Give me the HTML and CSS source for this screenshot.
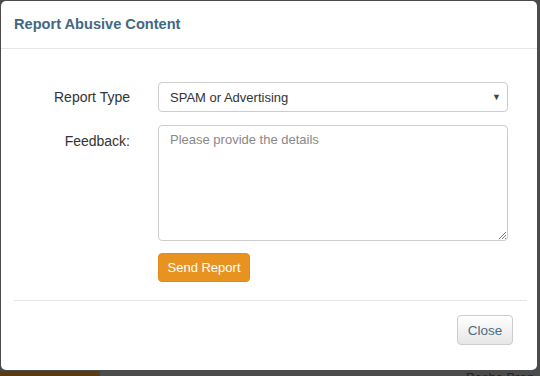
FILE: index.html
```html
<!DOCTYPE html>
<html>
<head>
<meta charset="utf-8">
<link rel="stylesheet" href="styles.css">
</head>
<body>
<div class="stage">
  <div class="modal">
    <div class="modal-header">
      <h4 class="modal-title">Report Abusive Content</h4>
    </div>
    <div class="modal-body">
      <div class="form-row type-row">
        <label class="form-label">Report Type</label>
        <div class="select">
          <span>SPAM or Advertising</span>
          <span class="caret">&#9660;</span>
        </div>
      </div>
      <div class="form-row feedback-row">
        <label class="form-label">Feedback:</label>
        <div class="textarea">
          <span class="placeholder">Please provide the details</span>
          <svg class="grip" width="8" height="8" viewBox="0 0 8 8"><path d="M8 1 L1 8 M8 4 L4 8 M8 7 L7 8" stroke="#777" stroke-width="1" fill="none"/></svg>
        </div>
      </div>
      <div class="form-row">
        <span class="form-label"></span>
        <button class="btn-send">Send Report</button>
      </div>
    </div>
    <div class="modal-footer">
      <button class="btn-close">Close</button>
    </div>
  </div>
  <div class="backdrop-strip">
    <div class="strip-brown"></div>
    <div class="strip-gray"></div>
    <div class="strip-text">Pasha Bran</div>
  </div>
</div>
</body>
</html>
```
FILE: styles.css
```css
html, body {
  margin: 0;
  padding: 0;
  background: #4b4b4b;
  font-family: "Liberation Sans", Arial, sans-serif;
  font-size: 14px;
  color: #333;
  overflow: hidden;
}
.stage {
  width: 540px;
  height: 376px;
  display: flex;
  flex-direction: column;
  padding-top: 1px;
  box-sizing: border-box;
}
.modal {
  margin-left: 1px;
  width: 536px;
  height: 369px;
  background: #fff;
  border-radius: 5px;
  display: flex;
  flex-direction: column;
  box-sizing: border-box;
  flex: none;
}
.modal-header {
  height: 48px;
  border-bottom: 1px solid #e5e5e5;
  display: flex;
  align-items: center;
  padding: 0 13px;
  box-sizing: border-box;
}
.modal-title {
  margin: 0;
  font-size: 14.6px;
  font-weight: bold;
  color: #436780;
  position: relative;
  top: -1px;
}
.modal-body {
  padding: 33px 29px 0 0;
  height: 251px;
  box-sizing: border-box;
}
.form-row {
  display: flex;
  align-items: flex-start;
  margin-bottom: 13px;
}
.form-label {
  width: 129px;
  margin-right: 28px;
  text-align: right;
  color: #333;
  flex: none;
  line-height: 30px;
  font-size: 14px;
}
.feedback-row .form-label {
  line-height: 33px;
}
.select {
  flex: 1;
  height: 30px;
  border: 1px solid #ccc;
  border-radius: 4px;
  box-sizing: border-box;
  display: flex;
  align-items: center;
  justify-content: space-between;
  padding: 0 6px 0 11px;
  color: #333;
  font-size: 13px;
}
.caret {
  font-size: 9px;
  color: #444;
}
.textarea {
  flex: 1;
  height: 116px;
  border: 1px solid #ccc;
  border-radius: 4px;
  box-sizing: border-box;
  padding: 6px 11px;
  position: relative;
  font-size: 13px;
}
.placeholder {
  color: #888;
}
.grip {
  position: absolute;
  right: 1px;
  bottom: 1px;
}
.btn-send {
  margin-top: -1px;
  height: 29px;
  width: 92px;
  background: #e8931f;
  border: 1px solid #e08a18;
  border-radius: 4px;
  color: #fff;
  font-family: "Liberation Sans", Arial, sans-serif;
  font-size: 13px;
  padding: 0;
}
.modal-footer {
  margin: 0 10px 0 13px;
  border-top: 1px solid #e5e5e5;
  padding-top: 14px;
  display: flex;
  justify-content: flex-end;
}
.btn-close {
  margin-right: 14px;
  width: 56px;
  height: 30px;
  border: 1px solid #ccc;
  border-radius: 4px;
  background: linear-gradient(#ffffff, #e6e6e6);
  color: #4a6b82;
  font-family: "Liberation Sans", Arial, sans-serif;
  font-size: 13.5px;
  padding: 0;
}
.backdrop-strip {
  flex: 1;
  display: flex;
  margin-top: 1px;
  position: relative;
  overflow: hidden;
}
.strip-brown {
  width: 100px;
  background: #5a3a10;
}
.strip-gray {
  flex: 1;
  background: #4b4b4b;
}
.strip-text {
  position: absolute;
  left: 466px;
  top: 0;
  color: #222;
  font-size: 13px;
  line-height: 13px;
}
```
